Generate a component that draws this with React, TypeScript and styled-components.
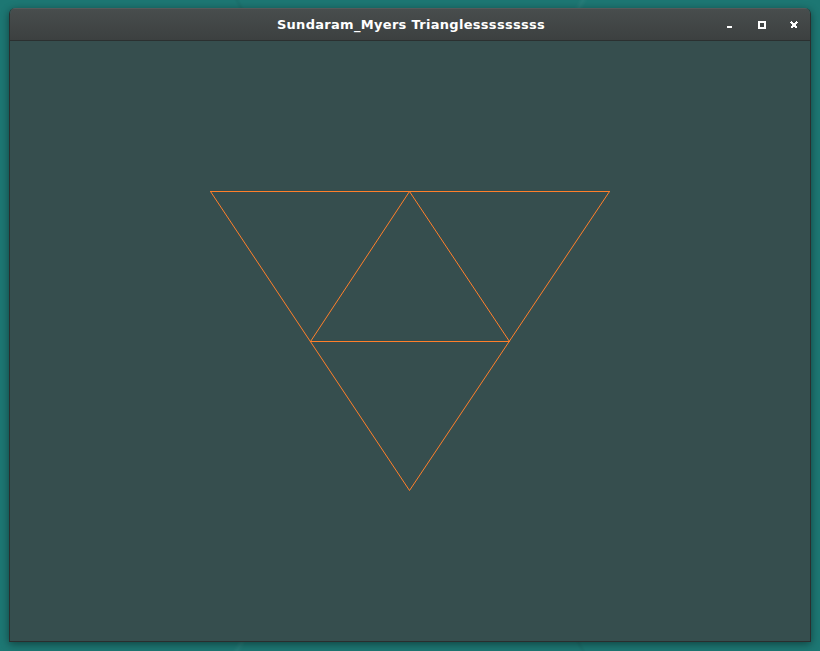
import React from "react";
import styled, { createGlobalStyle } from "styled-components";

const Global = createGlobalStyle`
  html, body { margin: 0; padding: 0; }
  body {
    width: 820px;
    height: 651px;
    overflow: hidden;
    background: #1d7773;
    background-image:
      linear-gradient(118deg, transparent 49.6%, rgba(255,255,255,0.04) 50%, transparent 50.4%),
      linear-gradient(62deg, transparent 49.7%, rgba(0,0,0,0.05) 50%, transparent 50.3%);
    font-family: "Noto Sans", "DejaVu Sans", sans-serif;
  }
`;

const Desktop = styled.div`
  width: 820px;
  height: 651px;
  padding: 8px 0 0 9px;
  box-sizing: border-box;
`;

const Window = styled.div`
  width: 802px;
  display: flex;
  flex-direction: column;
  border: 1px solid #2a2e2e;
  border-top: none;
  border-radius: 6px 6px 0 0;
  box-sizing: border-box;
  box-shadow: 0 2px 8px rgba(0, 0, 0, 0.45);
  overflow: hidden;
`;

const TitleBar = styled.div`
  height: 33px;
  display: grid;
  grid-template-columns: 1fr auto 1fr;
  align-items: center;
  background: linear-gradient(#484d4d, #3c4040);
  border-bottom: 1px solid #2b3030;
  border-top: 1px solid #555a5a;
  box-sizing: border-box;
`;

const Title = styled.div`
  grid-column: 2;
  color: #ffffff;
  font-family: "DejaVu Sans", "Noto Sans", sans-serif;
  font-weight: bold;
  font-size: 13px;
  letter-spacing: 0.3px;
  padding-left: 2px;
`;

const Buttons = styled.div`
  grid-column: 3;
  justify-self: end;
  display: flex;
  align-items: center;
  padding-right: 0;
`;

const Btn = styled.div`
  width: 32px;
  height: 20px;
  display: flex;
  align-items: center;
  justify-content: center;
`;

const Canvas = styled.div`
  width: 800px;
  height: 600px;
  background: #364e4e;
`;

const Lines = styled.svg`
  display: block;
`;

const orange = "#ff7f2a";

export default function App() {
  return (
    <>
      <Global />
      <Desktop>
        <Window>
          <TitleBar>
            <Title>Sundaram_Myers Trianglesssssssss</Title>
            <Buttons>
              <Btn>
                <svg width="8" height="8" viewBox="0 0 8 8" shapeRendering="crispEdges">
                  <rect x="1" y="5" width="5" height="2" fill="#fff" />
                </svg>
              </Btn>
              <Btn>
                <svg width="8" height="8" viewBox="0 0 8 8" shapeRendering="crispEdges">
                  <rect x="0.5" y="0.5" width="6" height="6" fill="none" stroke="#fff" strokeWidth="2" />
                </svg>
              </Btn>
              <Btn>
                <svg width="8" height="8" viewBox="0 0 8 8" shapeRendering="crispEdges">
                  <path d="M1 1 L7 7 M7 1 L1 7" stroke="#fff" strokeWidth="2" />
                </svg>
              </Btn>
            </Buttons>
          </TitleBar>
          <Canvas>
            <Lines width="800" height="600" viewBox="0 0 800 600">
              <g stroke={orange} strokeWidth="1" fill="none" shapeRendering="crispEdges">
                <line x1="200" y1="150.5" x2="600" y2="150.5" />
                <line x1="300" y1="300.5" x2="500" y2="300.5" />
              </g>
              <g stroke={orange} strokeWidth="1" fill="none">
                <line x1="200.5" y1="150.5" x2="399.5" y2="449.5" />
                <line x1="599.5" y1="150.5" x2="399.5" y2="449.5" />
                <line x1="399.5" y1="150.5" x2="300.5" y2="300.5" />
                <line x1="399.5" y1="150.5" x2="499.5" y2="300.5" />
              </g>
            </Lines>
          </Canvas>
        </Window>
      </Desktop>
    </>
  );
}
